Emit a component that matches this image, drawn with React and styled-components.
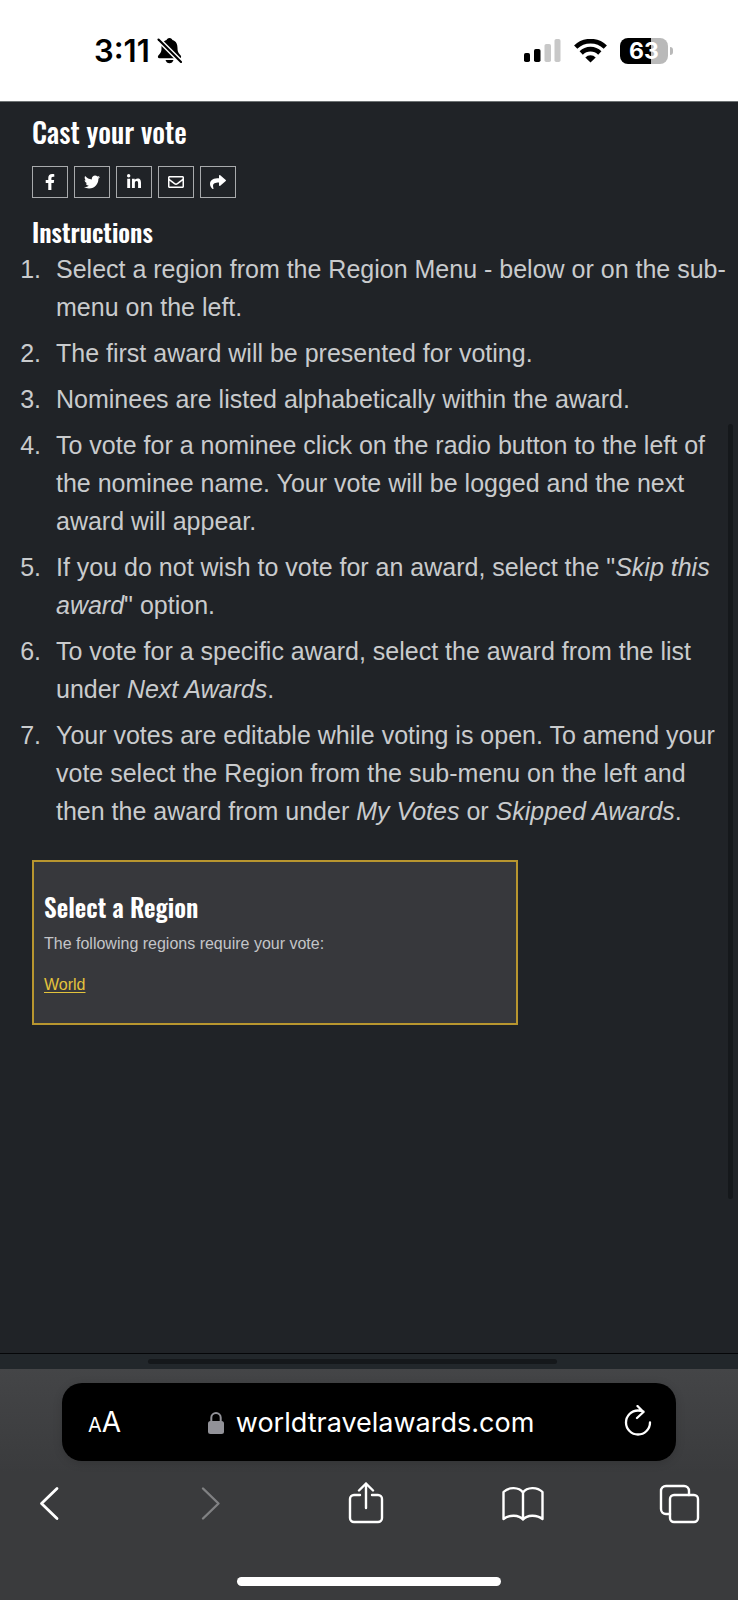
import React from 'react';
import styled, { createGlobalStyle } from 'styled-components';
import { FaFacebookF, FaTwitter, FaLinkedinIn, FaRegEnvelope, FaShare } from 'react-icons/fa';

const GlobalStyle = createGlobalStyle`
  * {
    box-sizing: border-box;
  }
  body {
    margin: 0;
    background: #202327;
  }
  svg {
    display: block;
  }
`;

const Screen = styled.div`
  display: flex;
  flex-direction: column;
  min-height: 100vh;
  font-family: 'Liberation Sans', Arial, sans-serif;
`;

// status bar
const StatusBar = styled.header`
  display: flex;
  justify-content: space-between;
  align-items: center;
  height: 101px;
  padding: 0 65px 0 94px;
  background: #fff;
  color: #000;
`;
const StatusGroup = styled.div`
  display: flex;
  align-items: center;
  gap: ${({ $gap }) => $gap}px;
`;
const Clock = styled.time`
  font: 600 31px/36px Inter, sans-serif;
`;
const Battery = styled.div`
  display: flex;
  align-items: center;
  gap: 2px;
`;
const BatteryLevel = styled.div`
  width: 48px;
  height: 26px;
  border-radius: 8px;
  background: linear-gradient(to right, #000 64%, #b9b9b9 64%);
  color: #fff;
  font: 700 23px/26px Inter, sans-serif;
  text-align: center;
`;
const BatteryTip = styled.div`
  width: 3px;
  height: 8px;
  border-radius: 0 3px 3px 0;
  background: #b9b9b9;
`;

// web page
const Page = styled.main`
  position: relative;
  flex: 1;
  padding: 11px 8px 0 32px;
  background: #202327;
  color: #fff;
  border-top: 1px solid #6d7273;
`;
const Title = styled.h1`
  margin: 0;
  font: 500 28px/38px Oswald, 'Liberation Sans Narrow', sans-serif;
`;
const Heading = styled.h2`
  margin: 0;
  font: 600 25px/34px Oswald, 'Liberation Sans Narrow', sans-serif;
`;
const ShareRow = styled.nav`
  display: flex;
  gap: 6px;
  margin: 15px 0 17px;
`;
const ShareLink = styled.a`
  display: flex;
  align-items: center;
  justify-content: center;
  width: 36px;
  height: 32px;
  border: 1px solid #a8aaac;
  color: #fff;
  font-size: 16px;
`;
const Steps = styled.ol`
  display: flex;
  flex-direction: column;
  gap: 8px;
  margin: 1px 0 30px;
  padding-left: 16px;
  color: #c9cbcd;
  font-size: 25px;
  line-height: 38px;
`;
const Step = styled.li`
  padding-left: 8px;
`;
const RegionBox = styled.section`
  max-width: 486px;
  padding: 28px 10px 26px;
  border: 2px solid #b8962f;
  background: #37383c;
`;
const RegionText = styled.p`
  margin: 8px 0 17px;
  color: #c4c5c8;
  font-size: 16px;
  line-height: 24px;
`;
const RegionLink = styled.a`
  color: #e3c33c;
  font-size: 16px;
  line-height: 24px;
  text-underline-offset: 2px;
`;
const ScrollThumb = styled.div`
  position: absolute;
  top: 25.7%;
  right: 5px;
  width: 5px;
  height: 62%;
  border-radius: 3px;
  background: #15181b;
`;
const PageEnd = styled.div`
  padding: 5px 0 5px;
  border-top: 1px solid #050608;
  background: #22272b;
`;
const ScrollTrack = styled.div`
  width: 55.5%;
  height: 5px;
  margin-left: 20%;
  border-radius: 3px;
  background: #15181b;
`;

// browser bar
const BrowserBar = styled.footer`
  padding: 14px 0;
  background: linear-gradient(#444547, #3a3b3d 45%, #3a3b3d);
  color: #fff;
`;
const AddressBar = styled.div`
  display: flex;
  align-items: center;
  justify-content: space-between;
  height: 78px;
  margin: 0 62px;
  padding: 0 22px 0 26px;
  border-radius: 20px;
  background: #000;
  box-shadow: 0 2px 10px rgba(0, 0, 0, 0.15);
`;
const IconButton = styled.button`
  padding: 0;
  border: none;
  background: none;
  color: ${({ disabled }) => (disabled ? '#808183' : '#fff')};
  font-family: Inter, sans-serif;
`;
const TextSize = styled(IconButton)`
  display: flex;
  align-items: baseline;
  padding-top: 3px;
  font-size: 28px;
  line-height: 34px;
`;
const SmallA = styled.span`
  font-size: 20px;
`;
const Address = styled.div`
  display: flex;
  align-items: center;
  gap: 12px;
  padding: 2px 3px 0 0;
  font: 400 27px/34px Inter, sans-serif;
`;
const Toolbar = styled.nav`
  display: flex;
  justify-content: space-between;
  padding: 21px 37px 0 29px;
`;
const HomeBar = styled.div`
  width: 264px;
  height: 9px;
  margin: 53px auto 0;
  border-radius: 5px;
  background: #fff;
`;

const shares = [
  { label: 'Facebook', Icon: FaFacebookF },
  { label: 'Twitter', Icon: FaTwitter },
  { label: 'LinkedIn', Icon: FaLinkedinIn },
  { label: 'Email', Icon: FaRegEnvelope },
  { label: 'Share', Icon: FaShare },
];

function ToolIcon({ children }) {
  return (
    <svg width="42" height="42" viewBox="0 0 42 42" fill="none" stroke="currentColor" strokeWidth="2.4" strokeLinecap="round" strokeLinejoin="round">
      {children}
    </svg>
  );
}

const tools = [
  { label: 'Back', art: <path d="M28 6.500L12.500 21.500L28 36.500" strokeWidth="2.8" /> },
  { label: 'Forward', disabled: true, art: <path d="M16 6.500l15.500 15L16 36.500" /> },
  {
    label: 'Share',
    art: <path d="M16 13h-6a4 4 0 0 0-4 4v19a4 4 0 0 0 4 4h24a4 4 0 0 0 4-4V17a4 4 0 0 0-4-4h-6M22 26V1.500M15 8.500L22 1.500l7 7" />,
  },
  {
    label: 'Bookmarks',
    art: <path d="M21 10.500C17 5 7 4.500 1.500 10v27C7 32.500 17 32.500 21 37.500c4-5 14-5 19.500-.5V10C35 4.500 25 5 21 10.500v27" />,
  },
  {
    label: 'Tabs',
    art: (
      <>
        <rect x="11" y="13" width="28" height="27" rx="4" />
        <path d="M11 32H7a5 5 0 0 1-5-5V9a5 5 0 0 1 5-5h18a5 5 0 0 1 5 5v4" />
      </>
    ),
  },
];

function Status() {
  return (
    <StatusBar>
      <StatusGroup $gap={7}>
        <Clock>3:11</Clock>
        <svg width="25" height="27" viewBox="0 0 25 27" aria-label="Silent">
          <path d="M12.500 1c-1.800 0-2.600 1-2.900 2C5.700 4.300 4.500 7.300 4.500 11c0 4-1 5.200-3 7.200-1.200 1.200-.6 3 .9 3h20.200c1.500 0 2.100-1.800.9-3-2-2-3-3.200-3-7.200 0-3.700-1.200-6.700-5.100-8-.3-1-1.100-2-2.900-2zM8.500 23h8c-.6 2-2 3.300-4 3.300s-3.400-1.300-4-3.300z" fill="#000" />
          <path d="M1.500 2.500L24 25" stroke="#fff" strokeWidth="5" />
          <path d="M1.500 2.500L24 25" stroke="#000" strokeWidth="2.100" strokeLinecap="round" />
        </svg>
      </StatusGroup>
      <StatusGroup $gap={13}>
        <svg width="37" height="24" viewBox="0 0 37 24" aria-label="Signal">
          <rect x="0" y="14" width="6" height="9" rx="1.800" />
          <rect x="10" y="10" width="6.500" height="13" rx="1.800" />
          <rect x="20.500" y="5" width="6.500" height="18" rx="1.800" fill="#c8c8c8" />
          <rect x="30.500" y="0" width="6" height="23" rx="1.800" fill="#c8c8c8" />
        </svg>
        <svg width="33" height="24" viewBox="0 0 33 24" fill="none" stroke="#000" strokeWidth="4.600" aria-label="Wi-Fi">
          <path d="M1.700 8.200a21 21 0 0 1 29.600 0" />
          <path d="M7.200 14a13.200 13.200 0 0 1 18.600 0" />
          <path d="M16.500 23.500l-5.200-5a7.300 7.300 0 0 1 10.400 0z" fill="#000" stroke="none" />
        </svg>
        <Battery>
          <BatteryLevel>63</BatteryLevel>
          <BatteryTip />
        </Battery>
      </StatusGroup>
    </StatusBar>
  );
}

function Instructions() {
  return (
    <Steps>
      <Step>Select a region from the Region Menu - below or on the sub-menu on the left.</Step>
      <Step>The first award will be presented for voting.</Step>
      <Step>Nominees are listed alphabetically within the award.</Step>
      <Step>
        To vote for a nominee click on the radio button to the left of the nominee name.
        Your vote will be logged and the next award will appear.
      </Step>
      <Step>If you do not wish to vote for an award, select the "<em>Skip this award</em>" option.</Step>
      <Step>To vote for a specific award, select the award from the list under <em>Next Awards</em>.</Step>
      <Step>
        Your votes are editable while voting is open. To amend your vote select the Region from
        the sub-menu on the left and then the award from under <em>My Votes</em> or <em>Skipped Awards</em>.
      </Step>
    </Steps>
  );
}

function Browser() {
  return (
    <BrowserBar>
      <AddressBar>
        <TextSize type="button" aria-label="Text size">
          <SmallA>A</SmallA>
          A
        </TextSize>
        <Address>
          <svg width="16" height="23" viewBox="0 0 16 23" aria-hidden="true">
            <rect x="0" y="9" width="16" height="13" rx="2.500" fill="#929298" />
            <path d="M3.300 11V5.700a4.700 4.700 0 0 1 9.400 0V11" fill="none" stroke="#929298" strokeWidth="2" />
          </svg>
          worldtravelawards.com
        </Address>
        <IconButton type="button" aria-label="Reload">
          <svg width="30" height="34" viewBox="0 0 30 34" fill="none" stroke="currentColor" strokeWidth="2.300" strokeLinecap="round" strokeLinejoin="round">
            <path d="M26 17.500A12 12 0 1 1 14 5.500c2 0 3.800.2 5.500 1M13.500 1l6 6-6.500 6" />
          </svg>
        </IconButton>
      </AddressBar>
      <Toolbar>
        {tools.map(({ label, art, disabled }) => (
          <IconButton key={label} type="button" aria-label={label} disabled={disabled}>
            <ToolIcon>{art}</ToolIcon>
          </IconButton>
        ))}
      </Toolbar>
      <HomeBar />
    </BrowserBar>
  );
}

function App() {
  return (
    <Screen>
      <GlobalStyle />
      <Status />
      <Page>
        <Title>Cast your vote</Title>
        <ShareRow>
          {shares.map(({ label, Icon }) => (
            <ShareLink key={label} href="#" aria-label={label}>
              <Icon />
            </ShareLink>
          ))}
        </ShareRow>
        <Heading>Instructions</Heading>
        <Instructions />
        <RegionBox>
          <Heading>Select a Region</Heading>
          <RegionText>The following regions require your vote:</RegionText>
          <RegionLink href="#">World</RegionLink>
        </RegionBox>
        <ScrollThumb />
      </Page>
      <PageEnd>
        <ScrollTrack />
      </PageEnd>
      <Browser />
    </Screen>
  );
}

export default App;
